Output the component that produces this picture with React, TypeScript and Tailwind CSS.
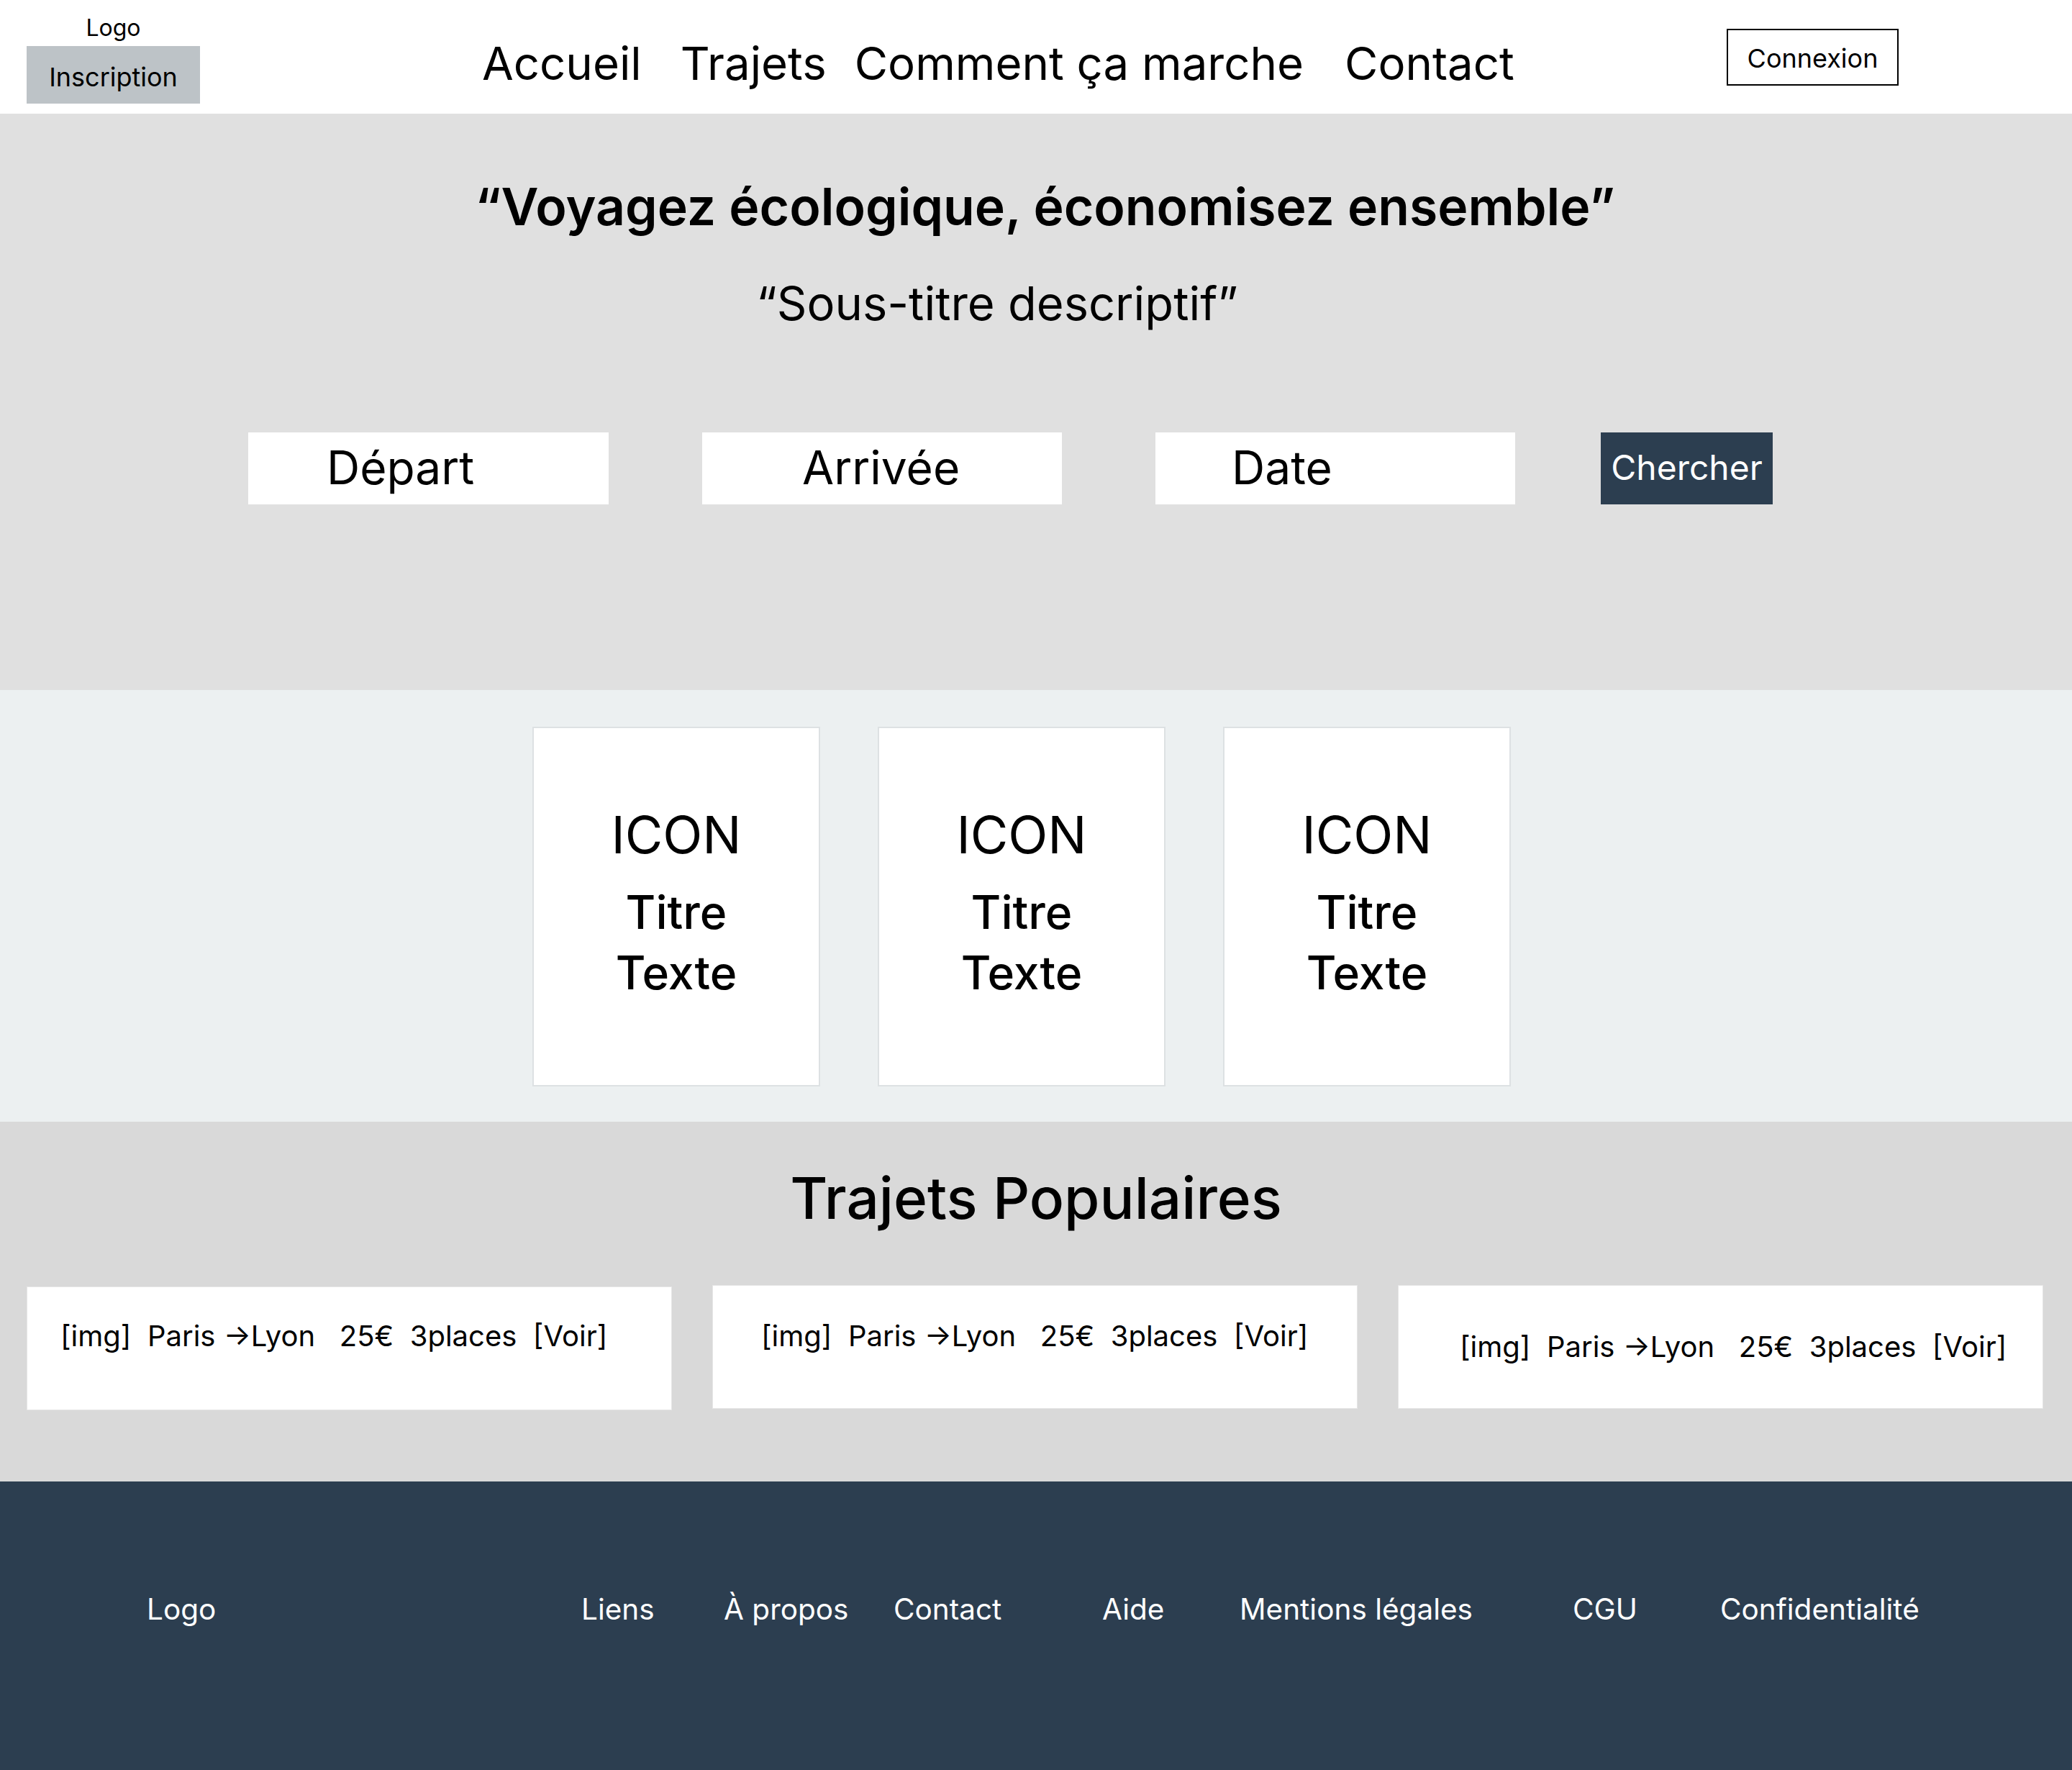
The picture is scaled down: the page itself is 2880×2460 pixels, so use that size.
const NAV = [
  { label: "Accueil", cls: "" },
  { label: "Trajets", cls: "ml-[54px]" },
  { label: "Comment ça marche", cls: "ml-[39px]" },
  { label: "Contact", cls: "ml-[57px]" },
];

const FIELDS = [
  { label: "Départ", cls: "w-[501px] pl-[109px]" },
  { label: "Arrivée", cls: "ml-[130px] w-[500px] pl-[139px]" },
  { label: "Date", cls: "ml-[130px] w-[500px] pl-[106px]" },
];

const TRIPS = [
  { cls: "mt-[2px] pl-[46px] pb-[34px]" },
  { cls: "pl-[67px] pb-[30px]" },
  { cls: "pl-[85px]" },
];

const FOOTER_LINKS = [
  { label: "Logo", cls: "w-[604px]" },
  { label: "Liens", cls: "w-[198px]" },
  { label: "À propos", cls: "w-[236px]" },
  { label: "Contact", cls: "w-[290px]" },
  { label: "Aide", cls: "w-[191px]" },
  { label: "Mentions légales", cls: "w-[463px]" },
  { label: "CGU", cls: "w-[205px]" },
  { label: "Confidentialité", cls: "" },
];

export default function App() {
  return (
    <div className="w-[2880px] font-['Inter','Noto_Sans',sans-serif] text-black">
      {/* header */}
      <header className="flex h-[158px] items-start bg-white pl-[37px]">
        <div className="flex w-[241px] flex-col items-center pt-[19px]">
          <span className="text-[32px] leading-[39px]">Logo</span>
          <div className="mt-[6px] flex h-[80px] w-full items-center justify-center bg-[#bdc3c7] pt-[5px] text-[36px]">
            Inscription
          </div>
        </div>

        <nav className="ml-[392px] mt-[49px] flex w-[1730px] whitespace-nowrap text-[63.5px] leading-[78px]">
          {NAV.map((item) => (
            <a key={item.label} className={item.cls}>
              {item.label}
            </a>
          ))}
        </nav>

        <button className="mt-[40px] flex h-[79px] w-[239px] items-center justify-center border-2 border-black pt-[2px] text-[36px]">
          Connexion
        </button>
      </header>

      {/* hero */}
      <section className="h-[801px] bg-[#e0e0e0] pt-[85px]">
        <h1 className="pl-[25px] text-center text-[71.5px] font-semibold leading-[88px]">
          “Voyagez écologique, économisez ensemble”
        </h1>
        <p className="mt-[52px] pr-[108px] text-center text-[65px] leading-[78px]">
          “Sous-titre descriptif”
        </p>

        <div className="mt-[140px] flex pl-[345px]">
          {FIELDS.map((field) => (
            <div
              key={field.label}
              className={`flex h-[100px] items-center bg-white pb-[2px] text-[64px] ${field.cls}`}
            >
              {field.label}
            </div>
          ))}
          <button className="ml-[119px] flex h-[100px] w-[239px] items-center justify-center bg-[#2c3e50] pb-[2px] text-[48px] text-white">
            Chercher
          </button>
        </div>
      </section>

      {/* features */}
      <section className="flex h-[600px] gap-[80px] bg-[#ecf0f1] pl-[740px] pt-[51px]">
        {[0, 1, 2].map((i) => (
          <div
            key={i}
            className="flex h-[500px] w-[400px] flex-col items-center border-2 border-[#dde1e3] bg-white pt-[104px]"
          >
            <span className="text-[72px] leading-[88px]">ICON</span>
            <span className="mt-[22px] text-[64px] font-medium leading-[84px]">Titre</span>
            <span className="text-[64px] font-medium leading-[84px]">Texte</span>
          </div>
        ))}
      </section>

      {/* popular trips */}
      <section className="h-[500px] bg-[#d9d9d9] pt-[57px]">
        <h2 className="text-center text-[80px] font-medium leading-[97px]">
          Trajets Populaires
        </h2>
        <div className="mt-[73px] flex items-start gap-[56px] pl-[37px]">
          {TRIPS.map((trip, i) => (
            <div
              key={i}
              className={`flex h-[172px] w-[897px] items-center border border-[#e6e6e6] bg-white text-[40px] ${trip.cls}`}
            >
              <span className="whitespace-pre">
                {"[img]  Paris →Lyon   25€  3places  [Voir]"}
              </span>
            </div>
          ))}
        </div>
      </section>

      {/* footer */}
      <footer className="flex h-[401px] items-start bg-[#2c3e50] pl-[204px] pt-[154px] text-[40.5px] leading-[48px] text-white">
        {FOOTER_LINKS.map((link) => (
          <span key={link.label} className={`whitespace-nowrap ${link.cls}`}>
            {link.label}
          </span>
        ))}
      </footer>
    </div>
  );
}
